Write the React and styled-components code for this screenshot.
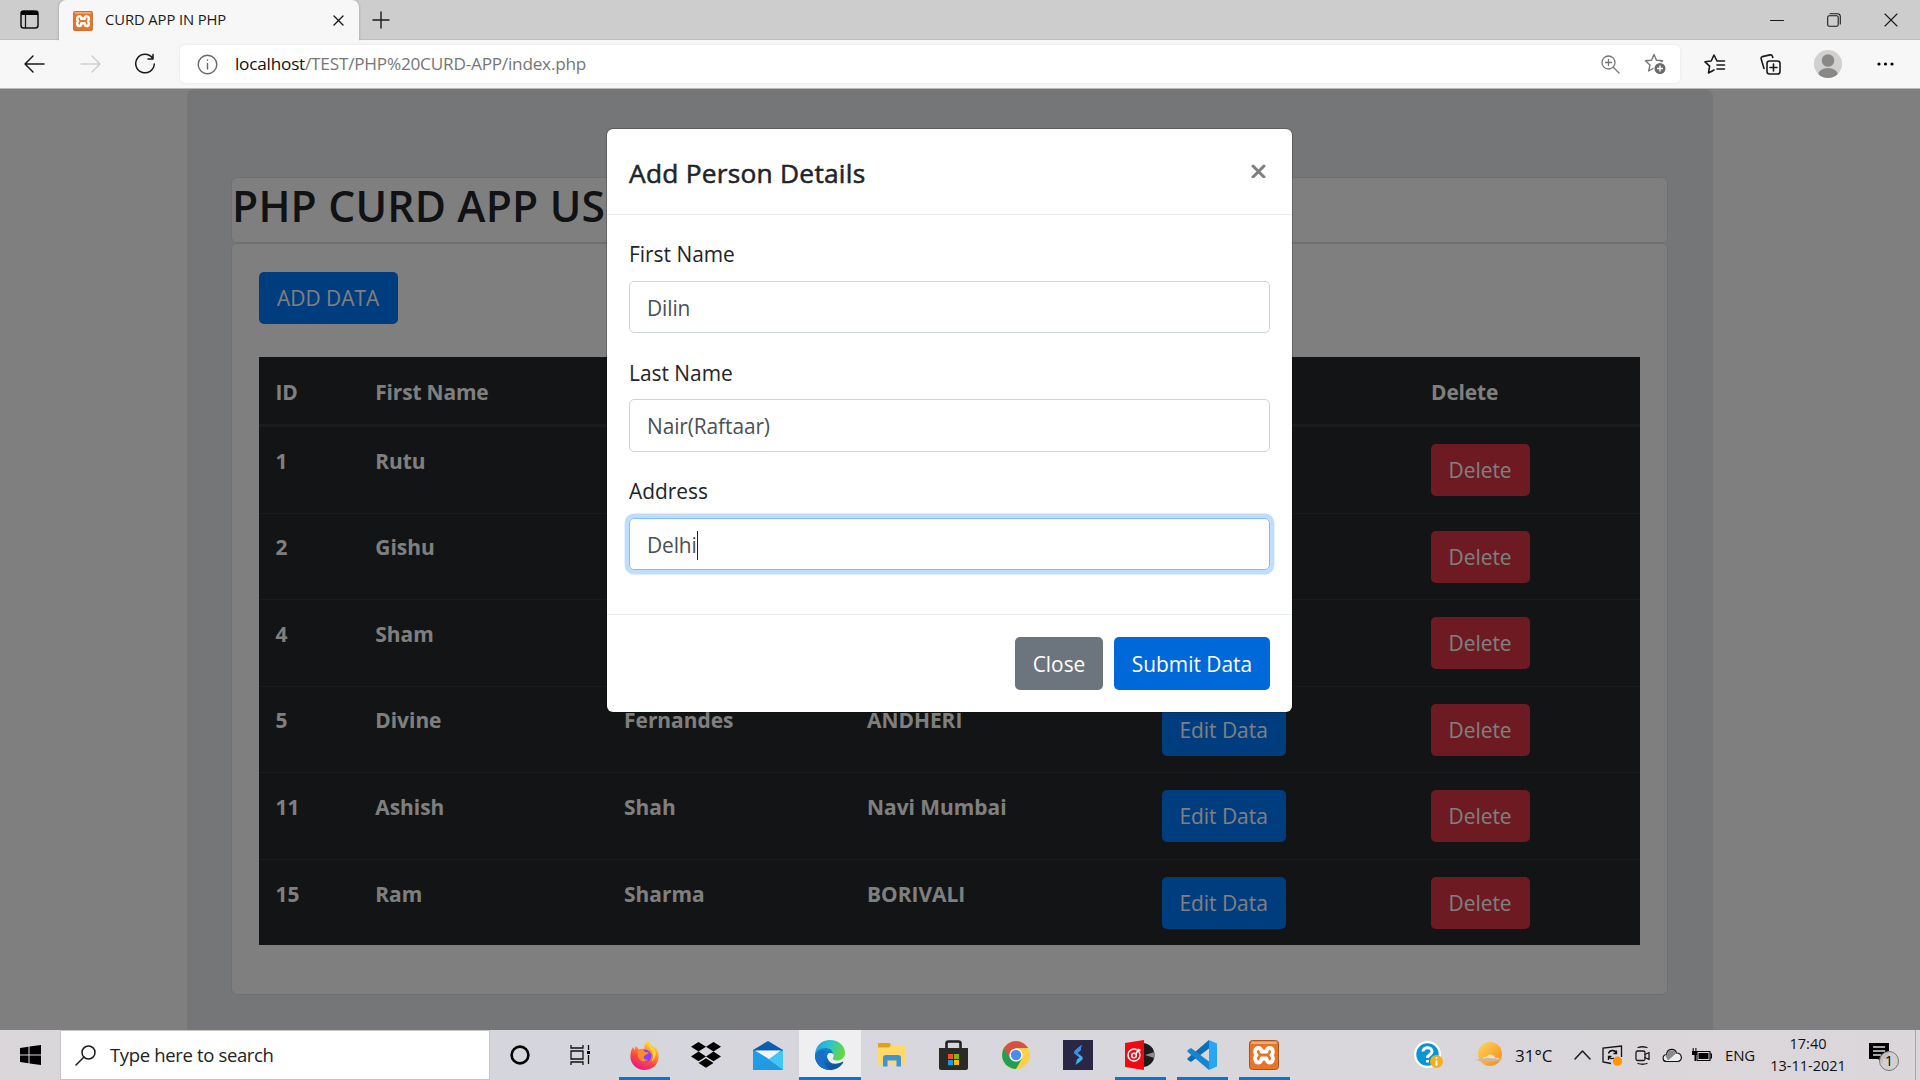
import React from "react";
import styled, { createGlobalStyle, css } from "styled-components";

const UI = `"Open Sans", "Noto Sans", sans-serif`;

const GlobalStyle = createGlobalStyle`
  *, *::before, *::after { box-sizing: border-box; }
  html, body { margin: 0; padding: 0; overflow: hidden; background: #fff; }
  body { font-family: ${UI}; color: #212529; }
  button, input { font: inherit; }
`;

/* ---------- text ---------- */
const Label = styled.span`
  display: block;
  white-space: nowrap;
  line-height: 1;
  font-size: ${(p) => p.$size || 20.9}px;
  font-weight: ${(p) => p.$weight || 400};
  letter-spacing: ${(p) => p.$track || 0}px;
  color: ${(p) => p.$color || "inherit"};
`;

const Screen = styled.div`
  width: 1920px;
  height: 1080px;
  display: grid;
  grid-template-rows: 40px 49px 941px 50px;
  overflow: hidden;
`;

/* ---------- browser chrome ---------- */
const TabStrip = styled.header`
  display: flex;
  background: #cdcdcd;
  border-bottom: 1px solid #bdbdbd;
`;
const TabActions = styled.div`
  width: 59px;
  display: grid;
  place-items: center;
`;
const Tab = styled.div`
  width: 300px;
  height: 41px;
  display: flex;
  align-items: center;
  padding: 0 15px 0 14px;
  gap: 12px;
  background: #f7f7f7;
  border-radius: 7px 7px 0 0;
  box-shadow: 0 0 3px rgba(0, 0, 0, 0.25);
  clip-path: inset(-4px -4px 0 -4px);
`;
const TabTitle = styled(Label)`
  flex: 1;
  padding-bottom: 2px;
  color: #1b1b1b;
`;
const NewTab = styled.div`
  width: 44px;
  display: grid;
  place-items: center;
`;
const WindowButtons = styled.div`
  display: flex;
  margin-left: auto;
`;
const WindowButton = styled.div`
  width: 57px;
  display: grid;
  place-items: center;
  &:last-child { width: 58px; }
`;
const Toolbar = styled.nav`
  display: flex;
  align-items: center;
  background: #f7f7f7;
  border-bottom: 1px solid #b9b9b9;
  padding: 0 12px 0 6px;
`;
const ToolButton = styled.div`
  width: ${(p) => p.$w || 55}px;
  display: grid;
  place-items: center;
`;
const AddressBar = styled.div`
  width: 1500px;
  height: 38px;
  margin-left: 8px;
  display: flex;
  align-items: center;
  padding: 0 0 0 17px;
  background: #fff;
  border-radius: 5px;
  box-shadow: 0 0 3px rgba(0, 0, 0, 0.1);
`;
const Url = styled.div`
  display: flex;
  margin-left: 17px;
  padding-bottom: 1px;
  flex: 1;
`;

/* ---------- page ---------- */
const Viewport = styled.main`
  position: relative;
  overflow: hidden;
  background: #fff;
`;
const Jumbotron = styled.section`
  width: 1526px;
  height: 1000px;
  margin-left: 187px;
  padding: 88px 45px 0 44px;
  background: #e9ecef;
  border-radius: 8px;
`;
const Card = styled.div`
  background: #fff;
  border: 1.4px solid #dfdfdf;
  border-radius: 6px;
`;
const TitleCard = styled(Card)`
  height: 66px;
  overflow: hidden;
`;
const PageTitle = styled.h1`
  margin: 0;
  font-size: 42.6px;
  font-weight: 600;
  line-height: 55px;
  white-space: nowrap;
  letter-spacing: 0.2px;
`;
const ContentCard = styled(Card)`
  height: 752px;
  padding: 28px 26.6px 0 26.6px;
`;
const Button = styled.button`
  display: inline-flex;
  align-items: center;
  justify-content: center;
  vertical-align: top;
  width: ${(p) => p.$w}px;
  height: ${(p) => p.$h || 52}px;
  padding: 1px 0 0 0;
  border: 0;
  border-radius: 5px;
  color: #fff;
  background: ${(p) =>
    ({ primary: "#007bff", active: "#0069d9", danger: "#dc3545", muted: "#6c757d" })[p.$tone]};
`;
const PeopleTable = styled.div`
  margin-top: 33px;
  background: #24282b;
  color: #fff;
`;
const Row = styled.div`
  display: grid;
  grid-template-columns: 99.7px 248.8px 243px 295px 269px 1fr;
  height: ${(p) => (p.$head ? 69.2 : 86.55)}px;
  border-top: ${(p) => (p.$head ? "0" : "1.4px")} solid #32383e;
  border-bottom: ${(p) => (p.$head ? "2px" : "0")} solid #32383e;
`;
const Cell = styled.div`
  padding: ${(p) => (p.$head ? 25 : p.$btn ? 17 : 23.6)}px 0 0 ${(p) => (p.$btn ? 16.5 : 17)}px;
`;

/* ---------- modal ---------- */
const Backdrop = styled.div`
  position: absolute;
  inset: 0;
  display: flex;
  justify-content: center;
  align-items: flex-start;
  padding: 40px 21px 0 0;
  background: rgba(0, 0, 0, 0.5);
`;
const Dialog = styled.div`
  width: 685px;
  height: 583px;
  display: flex;
  flex-direction: column;
  background: #fff;
  border-radius: 6px;
  box-shadow: 0 0 0 1px rgba(0, 0, 0, 0.2);
`;
const DialogHeader = styled.div`
  height: 86px;
  display: flex;
  justify-content: space-between;
  padding: 31px 25px 0 22px;
  border-bottom: 1px solid #e9ecef;
  svg { margin-top: 1px; }
`;
const DialogTitle = styled(Label)`
  -webkit-text-stroke: 0.55px currentColor;
`;
const DialogBody = styled.div`
  height: 399px;
  padding: 29px 22px 0;
`;
const Field = styled.label`
  display: block;
  height: 118.5px;
`;
const Input = styled.div`
  display: flex;
  align-items: center;
  height: 52.5px;
  margin-top: 16px;
  padding: 2px 18px 0 17px;
  border: 1.4px solid #ced4da;
  border-radius: 5px;
  color: #495057;
  ${(p) =>
    p.$focus &&
    css`
      border-color: #80bdff;
      box-shadow: 0 0 0 4.4px #bfdeff;
    `}
`;
const Caret = styled.i`
  width: 1px;
  height: 29px;
  background: #222;
`;
const DialogFooter = styled.div`
  flex: 1;
  display: flex;
  justify-content: flex-end;
  gap: 11px;
  padding: 22px 22px 0;
  border-top: 1px solid #e9ecef;
`;

/* ---------- taskbar ---------- */
const Taskbar = styled.footer`
  display: flex;
  background: linear-gradient(90deg, #dad6da 0%, #d5d6dd 28%, #d8d7dc 60%, #dbd6da 100%);
  color: #111;
`;
const Start = styled.div`
  width: 60px;
  display: grid;
  place-items: center;
`;
const Search = styled.div`
  width: 429.5px;
  display: flex;
  align-items: center;
  gap: 14px;
  padding-left: 14px;
  background: #fff;
  border: 1px solid #c6c4c6;
`;
const TaskItem = styled.div`
  width: ${(p) => p.$w || 62}px;
  padding-right: ${(p) => p.$shift || 0}px;
  display: grid;
  place-items: center;
  background: ${(p) => (p.$active ? "#efeff2" : "transparent")};
  background-image: ${(p) =>
    p.$open || p.$active ? "linear-gradient(#0078d7, #0078d7)" : "none"};
  background-repeat: no-repeat;
  background-position: center bottom;
  background-size: ${(p) => (p.$active ? "100%" : "51px")} 3px;
`;
const Tray = styled.div`
  margin-left: auto;
  display: flex;
  align-items: center;
  padding-right: 4px;
`;
const TraySlot = styled.div`
  width: ${(p) => p.$w}px;
  display: flex;
  flex-shrink: 0;
`;
const Clock = styled.div`
  width: 98px;
  display: flex;
  flex-direction: column;
  align-items: center;
  gap: 8px;
  padding-right: 24px;
`;
const ShowDesktop = styled.div`
  width: 1px;
  height: 50px;
  background: #aaa7aa;
`;

/* ---------- drawings ---------- */
const Stroke = ({ w, h, vb, sw = 1.5, color = "#1a1a1a", children }) => (
  <svg width={w} height={h} viewBox={vb || `0 0 ${w} ${h}`} fill="none" stroke={color} strokeWidth={sw} strokeLinecap="round" strokeLinejoin="round">
    {children}
  </svg>
);

const Xampp = ({ w, h }) => (
  <svg width={w} height={h} viewBox="0 0 30 30" preserveAspectRatio="none">
    <rect x="0.5" y="0.5" width="29" height="29" rx="3" fill="#ea7326" stroke="#a9541f" />
    <rect x="2" y="1.500" width="26" height="2.500" rx="1.200" fill="#f3a878" />
    <path
      d="M9.500 8C6 8 5 12.500 7.500 15C5 17.500 6 22.500 9.500 22.500C12 22.500 12.500 19.500 12.500 18.500H17.500C17.500 19.500 18 22.500 20.500 22.500C24 22.500 25 17.500 22.500 15C25 12.500 24 8 20.500 8C18 8 17.500 10.500 17.500 11.500H12.500C12.500 10.500 12 8 9.500 8z"
      fill="#ea7326" stroke="#fff" strokeWidth="3.800" strokeLinejoin="round" strokeLinecap="round"
    />
  </svg>
);

const Firefox = () => (
  <svg width="29" height="30" viewBox="0 0 29 30">
    <defs>
      <linearGradient id="fx" x1="0.8" y1="0" x2="0.3" y2="1">
        <stop offset="0" stopColor="#fff44f" /><stop offset="0.35" stopColor="#ff9a2e" />
        <stop offset="0.65" stopColor="#ff4a45" /><stop offset="1" stopColor="#e31587" />
      </linearGradient>
    </defs>
    <path d="M3 7l1.500 3L6 6l3 3.500c2-1 4-1 5-.5C14 5 16 2 19 0c0 4 3 5 5.500 8l1-1C28 10 29 14 28.500 18C28 25 22 30 14.500 30S0 24 .4 16C.6 12 1.500 9 3 7z" fill="url(#fx)" />
    <circle cx="15" cy="16" r="6.500" fill="#8a3ffc" />
    <path d="M9 10c3-1 5 0 6 2l4 .5c-1 2-4 2-5 4s1 4 4 3c-3 4-9 2-10-3c-.5-3 0-5 1-6.500z" fill="#ff8a2b" />
    <path d="M17 3c1 4 6 6 6 13c0 3-1 5-2 6c5-3 6-9 3-13z" fill="#ffd43d" />
  </svg>
);
const Dropbox = () => (
  <svg width="30" height="26" viewBox="0 0 30 26">
    <path fill="#000" d="M7.500 0l7.500 4.800l-7.500 4.800L0 4.800zM22.500 0L30 4.800l-7.500 4.800L15 4.800zM7.500 9.600l7.500 4.800l-7.500 4.800L0 14.400zM22.500 9.600l7.500 4.800l-7.500 4.800l-7.500-4.800zM15 16.200l7.500 4.800L15 25.800L7.500 21z" />
  </svg>
);
const Mail = () => (
  <svg width="30" height="29" viewBox="0 0 30 29">
    <path d="M0 9L15 0l15 9v2H0z" fill="#0a5cb0" />
    <path d="M0 9.500h30v19.500H0z" fill="#1f9ee6" />
    <path d="M30 9.500V29L14 17.500z" fill="#3fc8f5" />
    <path d="M0 29h30L15 18z" fill="#2499e0" />
    <path d="M2 9.500h26L16 18z" fill="#f4f4f6" />
  </svg>
);
const Edge = () => (
  <svg width="30" height="30" viewBox="0 0 30 30">
    <defs>
      <linearGradient id="eg" x1="0" y1="0" x2="1" y2="0.300"><stop offset="0" stopColor="#1f9fe0" /><stop offset=".5" stopColor="#2cc3d0" /><stop offset="1" stopColor="#62d845" /></linearGradient>
      <linearGradient id="eb" x1="0" y1="0" x2="0.600" y2="1"><stop offset="0" stopColor="#1b8fdc" /><stop offset="1" stopColor="#0c4fa0" /></linearGradient>
    </defs>
    <path d="M0 14C1 5 7 0 15 0c9 0 15 6 15 13c0 5-4 7.500-8 7.500c-3 0-5-1-4-2.500c2-3 0-7-5-7C7 11 2 13 0 19z" fill="url(#eg)" />
    <path d="M0 16c0-5 5-8 10-8c4 0 8 2 8 6c-4-3-7 1-5 5c2 5 8 6 14 3c1-.5 1.500.3 1 1c-3 4.500-8 7-13 7C6 30 0 23 0 16z" fill="url(#eb)" />
    <path d="M11 11c-5 4-4 15 5 19C6 30 0 23 0 16c0-4 5-7 11-5z" fill="#1670c8" />
    <path d="M18 14c-4-3-7 1-5 5c1 2.500 3 4 5 4.500c-2-2-2-3.500-.5-5.500z" fill="#efeff2" />
  </svg>
);
const Folder = () => (
  <svg width="28" height="24" viewBox="0 0 28 24">
    <path d="M0 1q0-1 1-1h11l1 2.500V5H0z" fill="#e0a11a" />
    <path d="M0 4.500h11l2-2.500h14q1 0 1 1v18.500H0z" fill="#ffd869" />
    <path d="M5 23.500V15q0-3 3-3h12q3 0 3 3v8.500h-4.500v-6h-9v6z" fill="#3f92d8" />
  </svg>
);
const Store = () => (
  <svg width="29" height="30" viewBox="0 0 29 30">
    <path d="M7.500 9V3.500q0-2 2-2h10q2 0 2 2V9" fill="none" stroke="#222" strokeWidth="2.600" />
    <path d="M0 8h29v20q0 2-2 2H2q-2 0-2-2z" fill="#2b2a29" />
    <path fill="#f25022" d="M9 14h5v5H9z" /><path fill="#7fba00" d="M15 14h5v5h-5z" />
    <path fill="#00a4ef" d="M9 20h5v5H9z" /><path fill="#ffb900" d="M15 20h5v5h-5z" />
  </svg>
);
const Chrome = () => (
  <svg width="28" height="28" viewBox="0 0 28 28">
    <circle cx="14" cy="14" r="14" fill="#fdd04c" />
    <path d="M14 14L1.880 7A14 14 0 0 0 14 28l6-10.500z" fill="#22a050" />
    <path d="M1.880 7A14 14 0 0 1 26.120 7H14l-6 10.500z" fill="#d94f43" />
    <circle cx="14" cy="14" r="6.600" fill="#fff" /><circle cx="14" cy="14" r="5.200" fill="#4a8bf5" />
  </svg>
);
const Bolt = () => (
  <svg width="30" height="30" viewBox="0 0 30 30">
    <path d="M0 0h30v30H0z" fill="#2a2745" />
    <path d="M18.500 5l-1 5.500l-3 2.500l5 4q.8 1.500-.5 3l-6.500 5l1.500-5.500l2.500-2l-5-4q-.8-1.500 .5-3z" fill="#3fb2f0" />
    <path d="M18.500 5l-1 5.500l-3 2.500l2 3.500l-5-3q-.8-1.500 .5-3z" fill="#3a8be6" />
  </svg>
);
const Music = () => (
  <svg width="30" height="30" viewBox="0 0 30 30">
    <circle cx="17.500" cy="15" r="12" fill="#1b1b1b" />
    <path d="M20 15l9.300-3v6z" fill="#8b8b8b" />
    <path d="M0 3L19 0v30L0 27z" fill="#f20a12" />
    <circle cx="9" cy="15" r="6" fill="none" stroke="#fff" strokeWidth="1.500" />
    <circle cx="9" cy="15.500" r="2.300" fill="none" stroke="#fff" strokeWidth="1.500" /><path d="M10.500 14.500l3-5l2 1" stroke="#fff" strokeWidth="1.500" fill="none" />
  </svg>
);
const Code = () => (
  <svg width="30" height="30" viewBox="0 0 30 30">
    <path d="M22 0v8.500L4 22l-3.500-2.200v-1.500z" fill="#0b6fb8" />
    <path d="M22 30v-8.500L4 8L.5 10.200v1.500z" fill="#1486d0" />
    <path d="M22 0l8 3.500v23L22 30z" fill="#2aa5f2" />
  </svg>
);
const Help = () => (
  <svg width="30" height="29" viewBox="0 0 30 29">
    <circle cx="13.500" cy="13.500" r="13.500" fill="#fff" /><circle cx="13.500" cy="13.500" r="11.200" fill="#0795d5" />
    <path d="M9 10.500C9 5.500 18 5.500 18 10.500c0 3-4.500 3-4.500 6.500M13.500 19v2.500" stroke="#fff" strokeWidth="3" fill="none" />
    <circle cx="22.500" cy="20.500" r="6.500" fill="#f7ae1c" /><path d="M22.500 19.500v5M22.500 16.300v1.600" stroke="#fff" strokeWidth="1.800" />
  </svg>
);
const Weather = () => (
  <svg width="29" height="26" viewBox="0 0 29 26">
    <defs><linearGradient id="sun" x1="0" y1="0" x2="1" y2="1"><stop offset="0" stopColor="#ffd75a" /><stop offset="1" stopColor="#f58a16" /></linearGradient></defs>
    <circle cx="15" cy="12" r="12" fill="url(#sun)" />
    <path d="M7 18c0-3 3-4 4.500-3c2-4 8-3 8.500 1c3-1 5 1 5 2z" fill="#fbe3c0" />
    <path d="M0 18q14-4 28 0q-14 3.500-28 0z" fill="#cdb5a3" />
  </svg>
);

const STAR = "M10 1.500l2.500 5.700l6.100.6l-4.600 4.100l1.300 6.100L10 15l-5.300 3l1.300-6.100L1.400 7.800l6.100-.6z";

const people = [
  ["1", "Rutu", "", ""],
  ["2", "Gishu", "", ""],
  ["4", "Sham", "", ""],
  ["5", "Divine", "Fernandes", "ANDHERI"],
  ["11", "Ashish", "Shah", "Navi Mumbai"],
  ["15", "Ram", "Sharma", "BORIVALI"],
];
const headings = ["ID", "First Name", "", "", "", "Delete"];
const fields = [["First Name", "Dilin"], ["Last Name", "Nair(Raftaar)"], ["Address", "Delhi"]];

const BrowserTabs = () => (
  <TabStrip>
    <TabActions>
      <svg width="19" height="19" viewBox="0 0 19 19"><rect x="1" y="1" width="17" height="17" rx="2.500" fill="none" stroke="#111" strokeWidth="1.500" /><path d="M1 5V3q0-2 2-2h13q2 0 2 2v2z" fill="#000" /><path d="M5.500 5v13" stroke="#111" strokeWidth="1.200" /></svg>
    </TabActions>
    <Tab>
      <Xampp w={20} h={20} />
      <TabTitle $size={14.8} $track={-0.1}>CURD APP IN PHP</TabTitle>
      <Stroke w={11} h={11} sw={1.4}><path d="M1 1l9 9M10 1l-9 9" /></Stroke>
    </Tab>
    <NewTab><Stroke w={18} h={18} sw={1.4}><path d="M9 1v16M1 9h16" /></Stroke></NewTab>
    <WindowButtons>
      <WindowButton><Stroke w={14} h={14} sw={1}><path d="M0.500 7.500h13" /></Stroke></WindowButton>
      <WindowButton><Stroke w={14} h={14} sw={1.1}><rect x="0.700" y="2.700" width="10.500" height="10.500" rx="1.500" /><path d="M3 .7h7.500q2.800 0 2.800 2.800V11" /></Stroke></WindowButton>
      <WindowButton><Stroke w={14} h={14} sw={1.1}><path d="M1 1l12 12M13 1L1 13" /></Stroke></WindowButton>
    </WindowButtons>
  </TabStrip>
);

const BrowserToolbar = () => (
  <Toolbar>
    <ToolButton $w={57}><Stroke w={21} h={18}><path d="M20 9H1M9 1L1 9l8 8" /></Stroke></ToolButton>
    <ToolButton $w={54}><Stroke w={21} h={18} color="#cfcfcf"><path d="M1 9h19M12 1l8 8l-8 8" /></Stroke></ToolButton>
    <ToolButton $w={55}><Stroke w={22} h={22}><path d="M18.500 5A9.300 9.300 0 1 0 20.300 11M19 1.500V6h-5" /></Stroke></ToolButton>
    <AddressBar>
      <Stroke w={21} h={21} color="#6a6a6a" sw={1.4}><circle cx="10.500" cy="10.500" r="9.300" /><path d="M10.500 9.500v5.500M10.500 6v.3" /></Stroke>
      <Url>
        <Label $size={17.2} $track={-0.22} $color="#111">localhost</Label>
        <Label $size={17.2} $track={-0.22} $color="#767676">/TEST/PHP%20CURD-APP/index.php</Label>
      </Url>
      <ToolButton $w={38}><Stroke w={19} h={19} color="#777" sw={1.3}><circle cx="7.500" cy="7.500" r="6.500" /><path d="M12.300 12.300L18 18M7.500 4.500v6M4.500 7.500h6" /></Stroke></ToolButton>
      <ToolButton $w={51}>
        <svg width="22" height="22" viewBox="0 0 22 22"><path d={STAR} fill="none" stroke="#777" strokeWidth="1.400" strokeLinejoin="round" /><circle cx="16" cy="15.500" r="6.500" fill="#fff" /><circle cx="16" cy="15.500" r="5.500" fill="#6b6b6b" /><path d="M16 12.500v6M13 15.500h6" stroke="#fff" strokeWidth="1.400" /></svg>
      </ToolButton>
    </AddressBar>
    <ToolButton $w={70}>
      <Stroke w={22} h={20} sw={1.6}><path d="M13 7L10 1L7.200 7L1 7.800l4.600 4.400L4.500 19l5.500-3M13 7h7.500M13 11h7.500M13 15h7.500" /></Stroke>
    </ToolButton>
    <ToolButton $w={40}>
      <Stroke w={21} h={21} sw={1.6}><rect x="7" y="7" width="13" height="13" rx="2.500" /><path d="M13.500 10v7M10 13.500h7M4 14.500L1.200 5q-.5-1.800 1.200-2.400L10 .9q1.800-.4 2.400 1.300l.4 1.300" /></Stroke>
    </ToolButton>
    <ToolButton $w={76}>
      <svg width="28" height="28" viewBox="0 0 28 28"><defs><clipPath id="av"><circle cx="14" cy="14" r="14" /></clipPath></defs><g clipPath="url(#av)"><path d="M0 0h28v28H0z" fill="#d2d0ce" /><circle cx="14" cy="10.500" r="6.300" fill="#8a8886" /><ellipse cx="14" cy="25" rx="10" ry="7" fill="#8a8886" /></g></svg>
    </ToolButton>
    <ToolButton $w={38}><svg width="17" height="4" viewBox="0 0 17 4"><circle cx="2" cy="2" r="1.600" /><circle cx="8.500" cy="2" r="1.600" /><circle cx="15" cy="2" r="1.600" /></svg></ToolButton>
  </Toolbar>
);

const PeoplePage = () => (
  <Jumbotron>
    <TitleCard><PageTitle>PHP CURD APP US</PageTitle></TitleCard>
    <ContentCard>
      <Button $tone="primary" $w={139}><Label>ADD DATA</Label></Button>
      <PeopleTable>
        <Row $head>{headings.map((h, i) => <Cell key={i} $head><Label $weight={700} $track={-0.15}>{h}</Label></Cell>)}</Row>
        {people.map((p) => (
          <Row key={p[0]}>
            {p.map((v, i) => <Cell key={i}><Label $weight={700}>{v}</Label></Cell>)}
            <Cell $btn>{p[2] && <Button $tone="primary" $w={124}><Label>Edit Data</Label></Button>}</Cell>
            <Cell $btn><Button $tone="danger" $w={99}><Label>Delete</Label></Button></Cell>
          </Row>
        ))}
      </PeopleTable>
    </ContentCard>
  </Jumbotron>
);

const AddPersonDialog = () => (
  <Backdrop>
    <Dialog>
      <DialogHeader>
        <DialogTitle $size={26.3} $track={0.25}>Add Person Details</DialogTitle>
        <Stroke w={17} h={17} sw={3} color="#7f7f7f"><path d="M3 5l11 11M14 5L3 16" /></Stroke>
      </DialogHeader>
      <DialogBody>
        {fields.map(([name, value], i) => (
          <Field key={name}>
            <Label>{name}</Label>
            <Input $focus={i === 2}><Label $track={-0.1}>{value}</Label>{i === 2 && <Caret />}</Input>
          </Field>
        ))}
      </DialogBody>
      <DialogFooter>
        <Button $tone="muted" $w={88} $h={53}><Label>Close</Label></Button>
        <Button $tone="active" $w={156} $h={53}><Label>Submit Data</Label></Button>
      </DialogFooter>
    </Dialog>
  </Backdrop>
);

const WindowsTaskbar = () => (
  <Taskbar>
    <Start><svg width="21" height="20" viewBox="0 0 21 20"><path d="M0 3l8.500-1.200v7.700H0zM9.500 1.600L21 0v9.500H9.500zM0 10.500h8.500v7.700L0 17zM9.500 10.500H21V20l-11.500-1.600z" /></svg></Start>
    <Search>
      <Stroke w={21} h={21} sw={1.5}><circle cx="13.500" cy="7.500" r="6.500" /><path d="M9 12L1 20" /></Stroke>
      <Label $size={18.5} $track={-0.35} $color="#222">Type here to search</Label>
    </Search>
    <TaskItem $w={61.5}><svg width="20" height="20" viewBox="0 0 20 20"><circle cx="10" cy="10" r="8.400" fill="none" stroke="#000" strokeWidth="2.600" /></svg></TaskItem>
    <TaskItem $w={62} $shift={4}><svg width="21" height="20" viewBox="0 0 21 20" fill="none" stroke="#111" strokeWidth="1.300"><path d="M1 0v3h12V0M1 20v-3h12v3M1 6h12v8H1zM18.500 0v5M18.500 10v9" /><path d="M17 6h3v3h-3z" fill="#000" stroke="none" /></svg></TaskItem>
    <TaskItem $open><Firefox /></TaskItem>
    <TaskItem><Dropbox /></TaskItem>
    <TaskItem><Mail /></TaskItem>
    <TaskItem $active><Edge /></TaskItem>
    <TaskItem><Folder /></TaskItem>
    <TaskItem $shift={1}><Store /></TaskItem>
    <TaskItem><Chrome /></TaskItem>
    <TaskItem><Bolt /></TaskItem>
    <TaskItem $open><Music /></TaskItem>
    <TaskItem $open><Code /></TaskItem>
    <TaskItem $open><Xampp w={30} h={30} /></TaskItem>
    <Tray>
      <TraySlot $w={61}><Help /></TraySlot>
      <TraySlot $w={40}><Weather /></TraySlot>
      <TraySlot $w={59}><Label $size={17}>31°C</Label></TraySlot>
      <TraySlot $w={28}><Stroke w={17} h={10} sw={1.5}><path d="M1 9l7.500-8L16 9" /></Stroke></TraySlot>
      <TraySlot $w={33}><svg width="21" height="21" viewBox="0 0 21 21"><path d="M9 18.500L1 17V3l18.500-2v11M6.500 8.500c1-4 7-4 8 0M14.500 5.500v3h-3M12 13c-2 1-4.500 .5-5.500-1.500M6.500 15v-3.500h3" fill="none" stroke="#111" strokeWidth="1.300" /><circle cx="15.500" cy="16.200" r="4.600" fill="#ff9500" /></svg></TraySlot>
      <TraySlot $w={27}><Stroke w={15} h={19} sw={1.3}><rect x="1" y="5" width="9" height="9.500" rx="1.500" /><path d="M10 8.500l4-2v7l-4-2M3 1.500q4.500-1.500 9 0M3 17.500q4.500 1.500 9 0" /></Stroke></TraySlot>
      <TraySlot $w={30}><svg width="20" height="15" viewBox="0 0 20 15"><path d="M4.500 13.500C0 13.500 0 7 4.500 6.500C5.500 0 13 0 14.500 5C20.500 5 21 13.500 15.500 13.500z" fill="#eee" stroke="#111" strokeWidth="1.200" /><path d="M4 9C3 7.500 4 6.500 5 6.500C6 1.500 12.500.5 14 5.500L6 12.500z" fill="#8a8a8a" /></svg></TraySlot>
      <TraySlot $w={33}><svg width="20" height="15" viewBox="0 0 20 15"><path d="M5 3.500h13v9H5zM18 6h1.500v4H18" fill="none" stroke="#000" strokeWidth="1.100" /><path d="M6.500 5h10v6h-10z" /><path d="M0 3h5v4H4v6H2.500V7H0zM.7 0h1v3h-1zM3.400 0h1v3h-1z" /></svg></TraySlot>
      <TraySlot $w={46}><Label $size={15} $track={-0.2}>ENG</Label></TraySlot>
      <Clock><Label $size={14.5}>17:40</Label><Label $size={14.5}>13-11-2021</Label></Clock>
      <TraySlot $w={46}><svg width="31" height="32" viewBox="0 0 31 32"><path d="M0 4h20v16H14v5l-5-5H0z" /><path d="M4 8h12M4 12h12M4 16h8" stroke="#ddd" strokeWidth="1.400" /><circle cx="20" cy="22" r="9.500" fill="#d2cfd2" fillOpacity=".93" stroke="#777" /><text x="20" y="27" fontSize="14" textAnchor="middle" fontFamily="Open Sans">1</text></svg></TraySlot>
      <ShowDesktop />
    </Tray>
  </Taskbar>
);

export default function App() {
  return (
    <Screen>
      <GlobalStyle />
      <BrowserTabs />
      <BrowserToolbar />
      <Viewport>
        <PeoplePage />
        <AddPersonDialog />
      </Viewport>
      <WindowsTaskbar />
    </Screen>
  );
}
